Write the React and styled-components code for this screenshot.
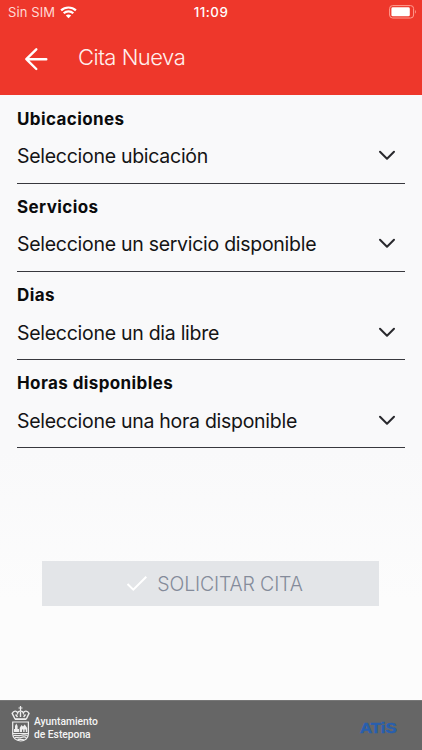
import React from "react";
import styled, { createGlobalStyle } from "styled-components";

const fields = [
  { label: "Ubicaciones", value: "Seleccione ubicación" },
  { label: "Servicios", value: "Seleccione un servicio disponible" },
  { label: "Dias", value: "Seleccione un dia libre" },
  { label: "Horas disponibles", value: "Seleccione una hora disponible" },
];

const WifiIcon = () => (
  <svg width="17" height="13" viewBox="0 0 17 13" fill="none">
    <path d="M1.1 4.4C5.2.5 11.8.5 15.9 4.4" stroke="white" strokeWidth="2.2" />
    <path d="M3.7 7.2C6.4 4.7 10.6 4.7 13.3 7.2" stroke="white" strokeWidth="2.2" />
    <path d="M5.8 9.5C7.4 8.1 9.6 8.1 11.2 9.5L8.5 12.3Z" fill="white" />
  </svg>
);

const BatteryIcon = () => (
  <svg width="28" height="14" viewBox="0 0 28 14" fill="none">
    <rect x="0.6" y="0.6" width="24" height="12.4" rx="3" stroke="#ff9d91" strokeWidth="1" />
    <rect x="2.4" y="2.3" width="18.4" height="9" rx="1.4" fill="white" />
    <path d="M26 5v3.6c1.2-.5 1.2-3.1 0-3.6Z" fill="#ff9d91" />
  </svg>
);

const BackIcon = () => (
  <svg width="24" height="24" viewBox="0 0 24 24" fill="none">
    <path
      d="M12.3 2.3L2.3 12.2L12.3 22M2.6 12.2H22.3"
      stroke="white"
      strokeWidth="2.4"
      strokeLinecap="round"
      strokeLinejoin="round"
    />
  </svg>
);

const ChevronIcon = () => (
  <svg width="18" height="12" viewBox="0 0 18 12" fill="none">
    <path
      d="M2 1.7L9 8.8L16 1.7"
      stroke="#29292d"
      strokeWidth="2"
      strokeLinecap="round"
      strokeLinejoin="round"
    />
  </svg>
);

const CheckIcon = () => (
  <svg width="22" height="17" viewBox="0 0 22 17" fill="none">
    <path d="M1.5 9L7.3 14.7L20.3 1.7" stroke="white" strokeWidth="2" />
  </svg>
);

const CrestIcon = () => (
  <svg width="20" height="37" viewBox="0 0 20 37" fill="none">
    <path d="M9.5 0v5M7.5 2h4" stroke="#eee" strokeWidth="1.2" />
    <path
      d="M4 13L1.2 7.4C2.8 4.4 5.5 4.5 6.6 7C7.2 4.5 11.8 4.5 12.4 7C13.5 4.5 16.4 4.4 18 7.4L15.3 13"
      stroke="#eee"
      strokeWidth="1.4"
    />
    <path d="M4.6 8.5L6.5 11M9.5 6V11M14.5 8.5L12.6 11" stroke="#eee" strokeWidth="1.4" />
    <path d="M3.8 12.2H15.4V14H3.8Z" fill="#eee" />
    <path
      d="M1.7 16H17.4V28C17.4 32 14 34.8 9.5 35C5 34.8 1.7 32 1.7 28Z"
      stroke="#eee"
      strokeWidth="1.2"
    />
    <path d="M3 26V23H4V20L5.3 17.5L6.6 20V23H8V26Z" fill="#eee" />
    <path d="M8.7 26V22L10.5 19L12 20.5L13.7 18.4L16.2 22V26H14.8V23.5H13.6V26H12.2V23.5H11V26Z" fill="#eee" />
    <path
      d="M2 27.5H17M2.5 29.5C5 28.7 7 30.3 9.5 29.5S14 28.7 16.7 29.5M4 31.6C6 30.8 8 32.4 10 31.6S14 30.8 15.3 31.6M6.5 33.5H12.8"
      stroke="#eee"
      strokeWidth="1.2"
    />
  </svg>
);

const App = () => {
  return (
    <>
      <GlobalStyle />
      <Screen>
        <Header>
          <StatusBar>
            <Carrier>
              Sin SIM
              <WifiIcon />
            </Carrier>
            <Clock>11:09</Clock>
            <Battery>
              <BatteryIcon />
            </Battery>
          </StatusBar>
          <NavBar>
            <BackButton aria-label="Volver">
              <BackIcon />
            </BackButton>
            <Title>Cita Nueva</Title>
          </NavBar>
        </Header>
        <Form>
          {fields.map((field) => (
            <Field key={field.label}>
              <Label>{field.label}</Label>
              <Select>
                <Value>{field.value}</Value>
                <ChevronIcon />
              </Select>
            </Field>
          ))}
          <SubmitButton disabled>
            <CheckIcon />
            <SubmitText>SOLICITAR CITA</SubmitText>
          </SubmitButton>
        </Form>
        <Footer>
          <Council>
            <CrestIcon />
            <CouncilName>
              Ayuntamiento
              <br />
              de Estepona
            </CouncilName>
          </Council>
          <Brand>ATiS</Brand>
        </Footer>
      </Screen>
    </>
  );
};

export default App;

const GlobalStyle = createGlobalStyle`
  * {
    box-sizing: border-box;
  }
  body {
    margin: 0;
    font-family: Inter, "Liberation Sans", sans-serif;
  }
  svg {
    display: block;
    flex-shrink: 0;
  }
`;
const Screen = styled.div`
  display: flex;
  flex-direction: column;
  width: 422px;
  height: 750px;
  overflow: hidden;
  background: linear-gradient(#f9f9fa 60%, #fcfcfc 80%);
`;
const Header = styled.header`
  height: 95px;
  color: white;
  background-color: #ee372b;
`;
const StatusBar = styled.div`
  display: grid;
  grid-template-columns: 1fr auto 1fr;
  align-items: center;
  height: 24px;
  padding: 0 5px 0 8px;
`;
const Carrier = styled.div`
  display: flex;
  align-items: center;
  gap: 5px;
  color: #ffd9d4;
  font-size: 13px;
  letter-spacing: 0.1px;
`;
const Clock = styled.div`
  margin-right: 3px;
  font-size: 13.3px;
  font-weight: 500;
  letter-spacing: 0.5px;
`;
const Battery = styled.div`
  display: flex;
  justify-content: flex-end;
`;
const NavBar = styled.div`
  display: flex;
  align-items: center;
  height: 70px;
  padding-left: 24px;
`;
const BackButton = styled.button`
  padding: 0;
  border: none;
  background: none;
  cursor: pointer;
`;
const Title = styled.h1`
  margin: 0 0 5px 30px;
  color: #fff0ed;
  font-size: 22px;
  font-weight: 300;
  line-height: 28px;
  letter-spacing: -0.5px;
  white-space: nowrap;
`;
const Form = styled.main`
  display: flex;
  flex-direction: column;
  flex: 1;
  padding: 0 17px;
`;
const Field = styled.div`
  height: 88.1px;
  padding-top: 12.6px;
`;
const Label = styled.div`
  color: #0b0b0c;
  font-size: 17px;
  font-weight: 700;
  line-height: 22px;
  letter-spacing: 0.4px;
`;
const Select = styled.div`
  display: flex;
  justify-content: space-between;
  align-items: center;
  height: 54.6px;
  padding: 0 9px 0 0;
  border-bottom: 1px solid #38383d;
`;
const Value = styled.div`
  color: #141415;
  font-size: 19.5px;
  font-weight: 400;
  letter-spacing: -0.28px;
  white-space: nowrap;
`;
const SubmitButton = styled.button`
  display: flex;
  justify-content: center;
  align-items: center;
  gap: 9px;
  height: 45px;
  margin: 113.6px 26px 0 25px;
  padding: 1px 0 0 8px;
  border: none;
  background-color: #e3e5e8;
`;
const SubmitText = styled.span`
  color: #848b9a;
  font-family: Inter, sans-serif;
  font-size: 19.5px;
  font-weight: 300;
  letter-spacing: -0.15px;
  white-space: nowrap;
`;
const Footer = styled.footer`
  display: flex;
  justify-content: space-between;
  height: 50px;
  padding: 5px 25px 0 11px;
  background-color: #666666;
  border-top: 1px solid #777777;
`;
const Council = styled.div`
  display: flex;
  gap: 3px;
`;
const CouncilName = styled.div`
  padding-top: 10px;
  color: #f4f4f4;
  font-family: Roboto, sans-serif;
  font-size: 10.3px;
  font-weight: 500;
  line-height: 12.5px;
  letter-spacing: -0.02px;
`;
const Brand = styled.div`
  padding-top: 13px;
  color: #285fae;
  font-family: "Liberation Sans", sans-serif;
  font-size: 14px;
  font-weight: 700;
  line-height: 18px;
  -webkit-text-stroke: 0.5px #285fae;
  transform: scaleX(1.2);
  transform-origin: right;
`;
